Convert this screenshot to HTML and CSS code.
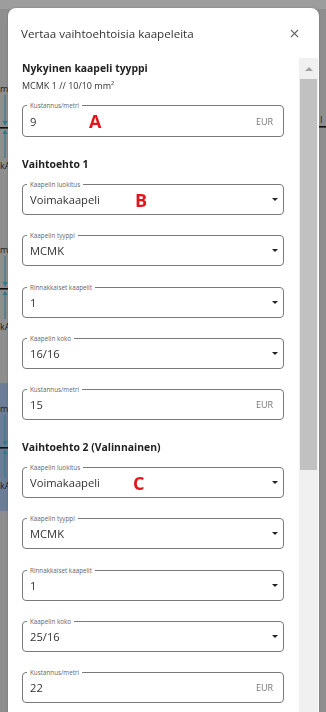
FILE: index.html
```html
<!DOCTYPE html>
<html lang="fi">
<head>
  <meta charset="UTF-8">
  <meta name="viewport" content="width=device-width, initial-scale=1.0">
  <title>Vertaa vaihtoehtoisia kaapeleita</title>
  <link rel="stylesheet" href="styles.css">
</head>
<body>

<div class="page">
  <div class="topbar"></div>
  <svg class="diagram" width="326" height="712" viewBox="0 0 326 712">
    <rect x="0" y="383" width="12" height="128" fill="#6c7e97"/>
    <g class="cable" transform="translate(0,0)">
      <text x="0" y="92">m0</text>
      <line x1="5" y1="95" x2="5" y2="124"/>
      <polygon points="2.5,121 7.5,121 5,126"/>
      <rect class="bus" x="0" y="127" width="12" height="1.6"/>
      <polygon points="2.5,134 7.5,134 5,129.5"/>
      <line x1="5" y1="132" x2="5" y2="158"/>
      <text x="0" y="169">kA</text>
    </g>
    <g class="cable" transform="translate(0,161)">
      <text x="0" y="92">m0</text>
      <line x1="5" y1="95" x2="5" y2="124"/>
      <polygon points="2.5,121 7.5,121 5,126"/>
      <rect class="bus" x="0" y="127" width="12" height="1.6"/>
      <polygon points="2.5,134 7.5,134 5,129.5"/>
      <line x1="5" y1="132" x2="5" y2="158"/>
      <text x="0" y="169">kA</text>
    </g>
    <g class="cable" transform="translate(0,320)">
      <text x="0" y="92">m0</text>
      <line x1="5" y1="95" x2="5" y2="124"/>
      <polygon points="2.5,121 7.5,121 5,126"/>
      <rect class="bus" x="0" y="127" width="12" height="1.6"/>
      <polygon points="2.5,134 7.5,134 5,129.5"/>
      <line x1="5" y1="132" x2="5" y2="158"/>
      <text x="0" y="169">kA</text>
    </g>
    <text class="edge-label" x="320" y="123">I</text>
    <rect class="bus" x="316" y="126" width="12" height="1.6"/>
  </svg>
</div>

<div class="overlay">
  <div class="modal">
    <div class="modal-header">
      <h2>Vertaa vaihtoehtoisia kaapeleita</h2>
      <button class="close" aria-label="Sulje">
        <svg width="9" height="9" viewBox="0 0 9 9"><path d="M1 1 L8 8 M8 1 L1 8" stroke="#666" stroke-width="1.1" fill="none"/></svg>
      </button>
    </div>

    <div class="modal-body">
      <div class="content">
        <h3 class="section-title first">Nykyinen kaapeli tyyppi</h3>
        <p class="current">MCMK 1 // 10/10 mm²</p>
        <div class="field tall">
          <span class="label">Kustannus/metri</span>
          <span class="value">9</span>
          <span class="unit">EUR</span>
          <span class="marker marker-a">A</span>
        </div>

        <h3 class="section-title">Vaihtoehto 1</h3>
        <div class="fields">
          <div class="field select">
            <span class="label">Kaapelin luokitus</span>
            <span class="value">Voimakaapeli</span>
            <span class="caret"></span>
            <span class="marker marker-b">B</span>
          </div>
          <div class="field select">
            <span class="label">Kaapelin tyyppi</span>
            <span class="value">MCMK</span>
            <span class="caret"></span>
          </div>
          <div class="field select">
            <span class="label">Rinnakkaiset kaapelit</span>
            <span class="value">1</span>
            <span class="caret"></span>
          </div>
          <div class="field select">
            <span class="label">Kaapelin koko</span>
            <span class="value">16/16</span>
            <span class="caret"></span>
          </div>
          <div class="field">
            <span class="label">Kustannus/metri</span>
            <span class="value">15</span>
            <span class="unit">EUR</span>
          </div>
        </div>

        <h3 class="section-title">Vaihtoehto 2 (Valinnainen)</h3>
        <div class="fields">
          <div class="field select">
            <span class="label">Kaapelin luokitus</span>
            <span class="value">Voimakaapeli</span>
            <span class="caret"></span>
            <span class="marker marker-c">C</span>
          </div>
          <div class="field select">
            <span class="label">Kaapelin tyyppi</span>
            <span class="value">MCMK</span>
            <span class="caret"></span>
          </div>
          <div class="field select">
            <span class="label">Rinnakkaiset kaapelit</span>
            <span class="value">1</span>
            <span class="caret"></span>
          </div>
          <div class="field select">
            <span class="label">Kaapelin koko</span>
            <span class="value">25/16</span>
            <span class="caret"></span>
          </div>
          <div class="field">
            <span class="label">Kustannus/metri</span>
            <span class="value">22</span>
            <span class="unit">EUR</span>
          </div>
        </div>
      </div>

      <div class="scrollbar">
        <div class="scroll-up"><span></span></div>
        <div class="scroll-thumb"></div>
      </div>
    </div>
  </div>
</div>

</body>
</html>
```

FILE: styles.css
```css
body {
  margin: 0;
  width: 326px;
  height: 712px;
  overflow: hidden;
  background-color: #8e8e8e;
  font-family: "Open Sans", "Noto Sans", sans-serif;
  color: #2b2b2b;
}

/* page behind the dialog (already dimmed) */
.page {
  position: relative;
  height: 712px;
}
.topbar {
  height: 9px;
  background-color: #9d9d9d;
}
.diagram {
  position: absolute;
  top: 0;
  left: 0;
}
.cable line {
  stroke: #2f7a88;
  stroke-width: 1.2;
}
.cable polygon {
  fill: #2f7a88;
}
.cable text,
.edge-label {
  font-family: "Open Sans", sans-serif;
  font-size: 9px;
  fill: #1e1e1e;
}
.bus {
  fill: #111;
}

/* dialog */
.overlay {
  position: fixed;
  inset: 0;
}
.modal {
  margin: 8px 0 0 8px;
  width: 311px;
  height: 720px;
  background-color: #fff;
  border-radius: 8px 8px 0 0;
  display: flex;
  flex-direction: column;
  box-shadow: 0 0 2px rgba(0, 0, 0, 0.25);
}
.modal-header {
  height: 50px;
  flex-shrink: 0;
  display: flex;
  align-items: center;
  justify-content: space-between;
  padding: 0 20px 0 13px;
}
.modal-header h2 {
  margin: 0;
  font-size: 11.6px;
  font-weight: 500;
  color: #333;
}
.close {
  border: none;
  background: none;
  padding: 0;
  width: 9px;
  height: 9px;
  display: flex;
  cursor: pointer;
}

.modal-body {
  flex: 1;
  display: flex;
  min-height: 0;
}
.content {
  flex: 1;
  padding: 2px 15px 0 14px;
}
.section-title {
  margin: 19px 0 12px;
  font-size: 10.4px;
  line-height: 16px;
  font-weight: 700;
  color: #222;
}
.section-title.first {
  margin: 0;
}
.current {
  margin: 3px 0 12px;
  font-size: 9px;
  line-height: 14px;
  color: #333;
}

.fields {
  display: flex;
  flex-direction: column;
  gap: 20.25px;
}
.field {
  position: relative;
  box-sizing: border-box;
  height: 31px;
  border: 1px solid #7a7a7a;
  border-radius: 4px;
  display: flex;
  align-items: center;
  padding: 0 10px 0 7px;
}
.field.tall {
  height: 32px;
}
.field.select {
  padding-right: 5px;
}
.label {
  position: absolute;
  top: -5px;
  left: 4px;
  padding: 0 3px;
  background-color: #fff;
  font-size: 6.3px;
  line-height: 9px;
  color: #666;
}
.value {
  flex: 1;
  font-size: 11.2px;
  color: #333;
}
.unit {
  font-size: 9px;
  color: #777;
}
.caret {
  width: 0;
  height: 0;
  border-left: 3px solid transparent;
  border-right: 3px solid transparent;
  border-top: 3.5px solid #222;
}
.marker {
  position: absolute;
  top: 50%;
  transform: translateY(-50%);
  font-size: 18px;
  font-weight: 700;
  color: #e4141c;
}
.marker-a {
  left: 66px;
}
.marker-b {
  left: 112px;
}
.marker-c {
  left: 110px;
}

/* scrollbar drawn as part of the dialog body */
.scrollbar {
  width: 19px;
  margin-right: 1px;
  flex-shrink: 0;
  background-color: #f0f0f0;
  display: flex;
  flex-direction: column;
}
.scroll-up {
  height: 21px;
  display: flex;
  align-items: center;
  justify-content: center;
}
.scroll-up span {
  width: 0;
  height: 0;
  border-left: 4px solid transparent;
  border-right: 4px solid transparent;
  border-bottom: 4px solid #a3a3a3;
}
.scroll-thumb {
  height: 391px;
  margin: 0 1px;
  background-color: #c1c1c1;
}
```
